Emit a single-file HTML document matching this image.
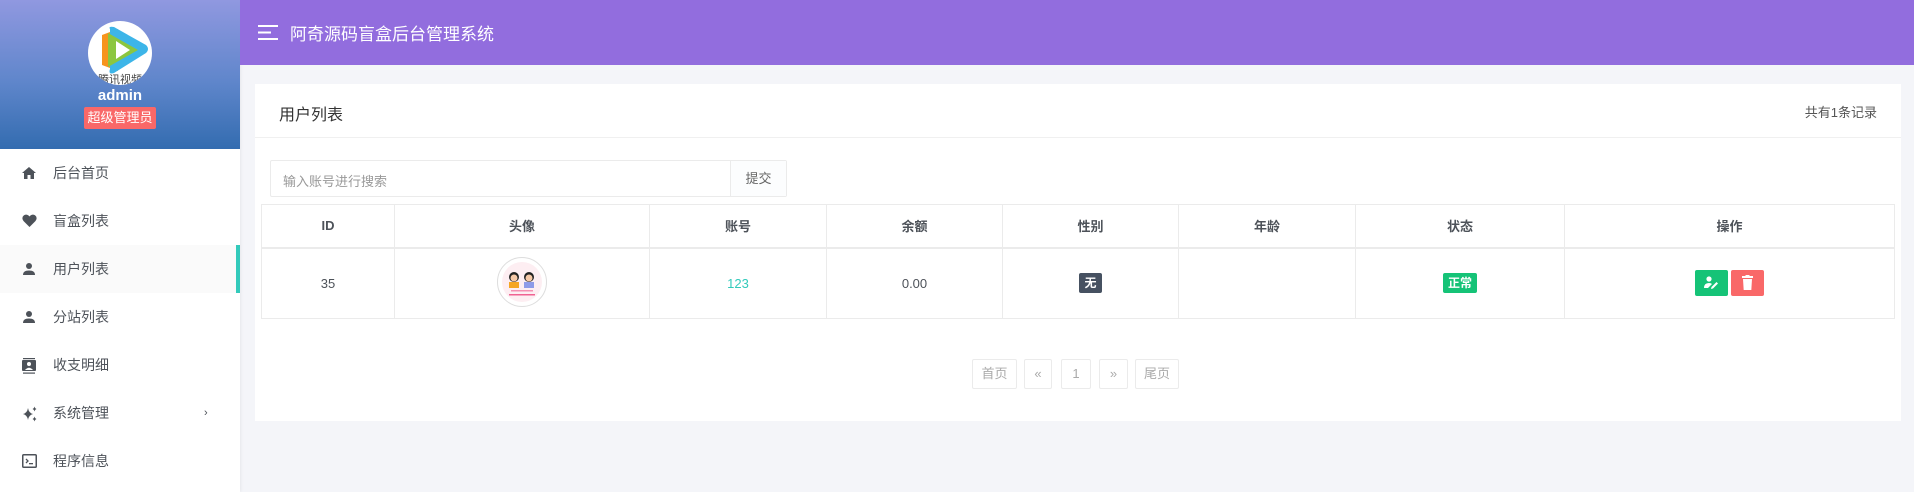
<!DOCTYPE html>
<html><head><meta charset="utf-8"><style>
*{margin:0;padding:0;box-sizing:border-box}
body{width:1914px;height:492px;overflow:hidden;background:#f4f5f9;font-family:"Liberation Sans","Noto Sans CJK SC",sans-serif;color:#333;position:relative}
.side{position:absolute;left:0;top:0;width:240px;height:492px;background:#fff;box-shadow:1px 0 3px rgba(0,0,0,.06)}
.sh{height:149px;background:linear-gradient(180deg,#9098e0 0%,#5f86cb 55%,#336cb0 100%);position:relative;text-align:center}
.av{position:absolute;left:88px;top:21px;width:64px;height:64px;border-radius:50%;background:#fff;overflow:hidden}
.adm{position:absolute;top:87px;width:100%;color:#fff;font-weight:bold;font-size:15px}
.badge{position:absolute;left:84px;top:107px;width:72px;height:22px;background:#f96868;color:#fff;font-size:13px;line-height:22px;border-radius:2px}
.mi{position:absolute;left:0;width:240px;height:48px;font-size:14px;color:#4d5259;line-height:48px}
.mi span{position:absolute;left:53px}
.mi svg{position:absolute;left:22px;top:17px}
.act{background:#fafafa;border-right:4px solid #33cabb}
.top{position:absolute;left:240px;top:0;width:1674px;height:65px;background:#926dde}
.top .t{position:absolute;left:50px;top:20px;color:#fff;font-size:17px}
.card{position:absolute;left:255px;top:84px;width:1646px;height:337px;background:#fff}
.ch{height:54px;border-bottom:1px solid #f0f0f0;position:relative}
.ch .a{position:absolute;left:24px;top:17px;font-size:16px;color:#333}
.ch .b{position:absolute;right:24px;top:18px;font-size:13px;color:#555}
.srch{position:absolute;left:15px;top:76px;width:517px;height:37px;border:1px solid #ebebeb;border-radius:2px}
.srch .p{position:absolute;left:12px;top:10px;font-size:13px;color:#999}
.srch .s{position:absolute;right:0;top:0;width:56px;height:35px;border-left:1px solid #ebebeb;background:#fcfdfe;font-size:13px;color:#666;text-align:center;line-height:35px}
table{position:absolute;left:6px;top:120px;border-collapse:collapse;width:1634px}
td,th{border:1px solid #ebebeb;text-align:center;font-size:13px;color:#4d5259}
th{height:43px;font-weight:bold;border-bottom:2px solid #ebebeb}
td{height:71px}
.pg{position:absolute;top:275px;height:30px;border:1px solid #ebebeb;font-size:13px;color:#aaa;text-align:center;line-height:28px;border-radius:2px}
.lb{display:inline-block;color:#fff;font-size:12px;font-weight:bold;border-radius:2px;line-height:20px;padding:0 5px}
.btn{display:inline-block;width:33px;height:26px;border-radius:2px;vertical-align:middle;position:relative}
</style></head><body>
<div class="side">
<div class="sh">
<div class="av"><svg width="64" height="64" viewBox="0 0 64 64"><path d="M14 14 L30 8 L30 50 L14 44 Z" fill="#f7941d"/><path d="M22 8 Q20 5 26 6 L58 24 Q62 28 58 32 L26 52 Q20 54 22 48 Z" fill="#3db5e8"/><path d="M20 12 L50 29 L20 46 Z" fill="#8cc63f"/><path d="M28 20 L42 29 L28 38 Z" fill="#fff"/><text x="32" y="62" font-size="11" text-anchor="middle" fill="#444" font-family="Noto Sans CJK SC">腾讯视频</text></svg></div>
<div class="adm">admin</div>
<div class="badge">超级管理员</div>
</div>
<div class="mi" style="top:149px"><svg width="14" height="14" viewBox="0 0 14 14"><path d="M7 1 L14 7 L12 7 L12 13 L8.5 13 L8.5 9 L5.5 9 L5.5 13 L2 13 L2 7 L0 7 Z" fill="#4d5259"/></svg><span>后台首页</span></div>
<div class="mi" style="top:197px"><svg width="15" height="14" viewBox="0 0 15 14"><path d="M7.5 13 L1.5 7 Q-1 3.5 2 1.3 Q5 -0.5 7.5 2.5 Q10 -0.5 13 1.3 Q16 3.5 13.5 7 Z" fill="#4d5259"/></svg><span>盲盒列表</span></div>
<div class="mi act" style="top:245px"><svg width="14" height="14" viewBox="0 0 14 14"><circle cx="7" cy="4" r="3" fill="#4d5259"/><path d="M1 13 Q1 8.5 7 8.5 Q13 8.5 13 13 Z" fill="#4d5259"/></svg><span>用户列表</span></div>
<div class="mi" style="top:293px"><svg width="14" height="14" viewBox="0 0 14 14"><circle cx="7" cy="4" r="3" fill="#4d5259"/><path d="M1 13 Q1 8.5 7 8.5 Q13 8.5 13 13 Z" fill="#4d5259"/></svg><span>分站列表</span></div>
<div class="mi" style="top:341px"><svg width="14" height="16" viewBox="0 0 14 16"><rect x="0" y="2" width="14" height="11" rx="1" fill="#4d5259"/><rect x="1" y="0" width="12" height="1.2" fill="#4d5259"/><rect x="1" y="14.5" width="12" height="1.2" fill="#4d5259"/><circle cx="7" cy="6" r="2" fill="#fff"/><path d="M3 12 Q7 7.5 11 12 Z" fill="#fff"/></svg><span>收支明细</span></div>
<div class="mi" style="top:389px"><svg width="16" height="16" viewBox="0 0 16 16"><path d="M6 2 Q6.8 7 11 8 Q6.8 9 6 14 Q5.2 9 1 8 Q5.2 7 6 2Z M12.5 0.5 Q13 2.5 14.5 3 Q13 3.5 12.5 5.5 Q12 3.5 10.5 3 Q12 2.5 12.5 0.5Z M12.5 10.5 Q13 12.5 14.5 13 Q13 13.5 12.5 15.5 Q12 13.5 10.5 13 Q12 12.5 12.5 10.5Z" fill="#4d5259"/></svg><span>系统管理</span><b style="position:absolute;left:204px;font-weight:normal;font-size:11px">›</b></div>
<div class="mi" style="top:437px"><svg width="15" height="14" viewBox="0 0 15 14"><rect x="0.75" y="0.75" width="13.5" height="12.5" rx="1" fill="none" stroke="#4d5259" stroke-width="1.5"/><path d="M4 5 L6 7 L4 9" fill="none" stroke="#4d5259" stroke-width="1.3"/><rect x="7" y="9" width="4" height="1.3" fill="#4d5259"/></svg><span>程序信息</span></div>
</div>
<div class="top">
<svg style="position:absolute;left:18px;top:25px" width="20" height="15" viewBox="0 0 20 15"><rect y="0" width="20" height="2" fill="#fff"/><rect y="6.5" width="13" height="2" fill="#fff"/><rect y="13" width="20" height="2" fill="#fff"/></svg>
<div class="t">阿奇源码盲盒后台管理系统</div>
</div>
<div class="card">
<div class="ch"><div class="a">用户列表</div><div class="b">共有1条记录</div></div>
<div class="srch"><div class="p">输入账号进行搜索</div><div class="s">提交</div></div>
<table>
<tr><th style="width:133px">ID</th><th style="width:255px">头像</th><th style="width:177px">账号</th><th style="width:176px">余额</th><th style="width:176px">性别</th><th style="width:177px">年龄</th><th style="width:209px">状态</th><th>操作</th></tr>
<tr><td>35</td><td><svg width="50" height="50" viewBox="0 0 50 50"><circle cx="25" cy="25" r="24.5" fill="#fff" stroke="#ddd"/><circle cx="25" cy="25" r="20" fill="#fdeef2"/><circle cx="17" cy="20" r="5" fill="#222"/><circle cx="17" cy="21" r="3.5" fill="#f6c9a8"/><rect x="12" y="25" width="10" height="6" fill="#f5a623"/><circle cx="32" cy="20" r="5" fill="#222"/><circle cx="32" cy="21" r="3.5" fill="#f6c9a8"/><rect x="27" y="25" width="10" height="6" fill="#8e9be8"/><rect x="14" y="33" width="22" height="1.5" fill="#f48fb1"/><rect x="12" y="37" width="26" height="1.5" fill="#f06292"/></svg></td><td style="color:#33cabb">123</td><td>0.00</td><td><span class="lb" style="background:#465161">无</span></td><td></td><td><span class="lb" style="background:#15c377">正常</span></td><td><span class="btn" style="background:#15c377"><svg style="position:absolute;left:9px;top:6px" width="15" height="14" viewBox="0 0 15 14"><circle cx="5" cy="3" r="2.6" fill="#fff"/><path d="M0 12 Q0 7 5 7 Q7 7 8 8 L4 12 Z" fill="#fff"/><path d="M7 13 L7.5 11 L12.5 6 L14 7.5 L9 12.5 Z" fill="#fff"/></svg></span> <span class="btn" style="background:#f96868"><svg style="position:absolute;left:11px;top:5px" width="11" height="15" viewBox="0 0 11 15"><rect x="0" y="1" width="11" height="2" fill="#fff"/><rect x="3.5" y="0" width="4" height="2" fill="#fff"/><path d="M1 4 L10 4 L9.3 15 L1.7 15 Z" fill="#fff"/></svg></span></td></tr>
</table>
<div class="pg" style="left:717px;width:45px">首页</div>
<div class="pg" style="left:769px;width:28px">«</div>
<div class="pg" style="left:806px;width:30px">1</div>
<div class="pg" style="left:844px;width:29px">»</div>
<div class="pg" style="left:880px;width:44px">尾页</div>
</div>
</body></html>
